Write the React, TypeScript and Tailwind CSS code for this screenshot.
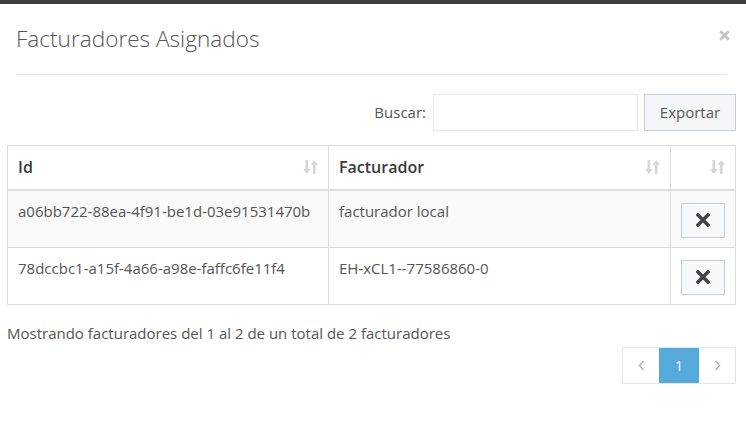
import React from "react";

const SortIcon = () => (
  <svg width="15" height="16" viewBox="0 0 15 16" className="text-[#d6d6d6]" fill="currentColor">
    <rect x="2.5" y="1" width="2.6" height="10" />
    <path d="M0 10 L7.6 10 L3.8 15 Z" />
    <rect x="9.9" y="5" width="2.6" height="10" />
    <path d="M7.4 6 L15 6 L11.2 1 Z" />
  </svg>
);

const XIcon = () => (
  <svg width="14" height="14" viewBox="0 0 14 14">
    <path d="M2 2 L12 12 M12 2 L2 12" stroke="#444" strokeWidth="3.6" strokeLinecap="square" />
  </svg>
);

const CloseIcon = () => (
  <svg width="11" height="11" viewBox="0 0 11 11">
    <path d="M1.2 1.2 L9.8 9.8 M9.8 1.2 L1.2 9.8" stroke="#c4c4c4" strokeWidth="2.8" />
  </svg>
);

const Chevron = ({ dir }: { dir: "l" | "r" }) => (
  <svg width="7" height="11" viewBox="0 0 7 11">
    <path d={dir === "l" ? "M5.5 1 L1.5 5.5 L5.5 10" : "M1.5 1 L5.5 5.5 L1.5 10"} fill="none" stroke="#aaa" strokeWidth="1.3" />
  </svg>
);

const rows = [
  { id: "a06bb722-88ea-4f91-be1d-03e91531470b", f: "facturador local" },
  { id: "78dccbc1-a15f-4a66-a98e-faffc6fe11f4", f: "EH-xCL1--77586860-0" },
];

export default function App() {
  return (
    <div className="w-[746px] h-[430px] bg-white text-[#555] overflow-hidden" style={{ fontFamily: "'Open Sans', sans-serif" }}>
      <div className="h-[4px] bg-[#3d3d3d]" />
      <div className="ml-[16px] mr-[19px] flex justify-between border-b border-[#e5e5e5] h-[71px]">
        <h1 className="text-[22.6px] font-light text-[#555] mt-[20px] leading-[30px]">Facturadores Asignados</h1>
        <span className="mt-[26px] mr-[-3px]"><CloseIcon /></span>
      </div>
      <div className="flex justify-end items-center mt-[19px] mr-[10px] text-[15px]">
        <span className="mr-[7px]">Buscar:</span>
        <div className="w-[205px] h-[37px] border border-[#e5e5e5]" />
        <button className="ml-[6px] w-[92px] h-[37px] border border-[#c5cdd9] bg-[#f5f6f9] text-[#555] text-[15px]">Exportar</button>
      </div>
      <table className="ml-[7px] mt-[14px] w-[729px] border-collapse text-[15px]">
        <thead>
          <tr className="h-[44px]">
            <th className="border border-[#ddd] border-b-2 text-left font-semibold text-[#3a3a3a] px-[10px] w-[321px] text-[16px]">
              <div className="flex justify-between items-center"><span>Id</span><SortIcon /></div>
            </th>
            <th className="border border-[#ddd] border-b-2 text-left font-semibold text-[#3a3a3a] px-[10px] w-[342px] text-[16px]">
              <div className="flex justify-between items-center"><span>Facturador</span><SortIcon /></div>
            </th>
            <th className="border border-[#ddd] border-b-2 px-[10px]">
              <div className="flex justify-end items-center"><SortIcon /></div>
            </th>
          </tr>
        </thead>
        <tbody>
          {rows.map((r, i) => (
            <tr key={r.id} className={i === 0 ? "bg-[#f9f9f9] h-[57px]" : "bg-white h-[56px]"}>
              <td className="border border-[#ddd] align-top px-[10px] pt-[10px] leading-[20px]">{r.id}</td>
              <td className="border border-[#ddd] align-top px-[10px] pt-[10px] leading-[20px]">{r.f}</td>
              <td className="border border-[#ddd] align-top pt-[12px] pb-[9px]">
                <div className="flex justify-center">
                  <button className="w-[44px] h-[35px] border border-[#c5cdd9] bg-[#f7f8fa] flex items-center justify-center">
                    <XIcon />
                  </button>
                </div>
              </td>
            </tr>
          ))}
        </tbody>
      </table>
      <div className="ml-[7px] mt-[18px] text-[15px] leading-[20px]">Mostrando facturadores del 1 al 2 de un total de 2 facturadores</div>
      <div className="flex justify-end mr-[10px] mt-[4px]">
        <div className="flex border border-[#e5e5e5] h-[37px]">
          <div className="w-[36px] flex items-center justify-center"><Chevron dir="l" /></div>
          <div className="w-[40px] flex items-center justify-center bg-[#55a9db] text-white text-[15px]">1</div>
          <div className="w-[36px] flex items-center justify-center"><Chevron dir="r" /></div>
        </div>
      </div>
    </div>
  );
}
